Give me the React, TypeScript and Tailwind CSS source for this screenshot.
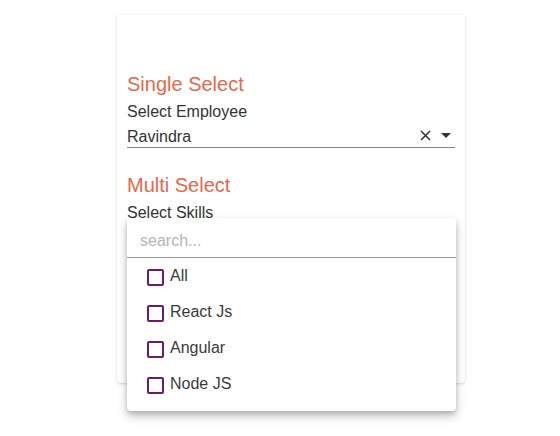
import { useState } from "react";

const skills = ["All", "React Js", "Angular", "Node JS"];

const App = () => {
	const [query, setQuery] = useState("");

	return (
		<div className="relative h-[436px] w-[560px] overflow-hidden bg-white font-['Liberation_Sans',Arial,sans-serif] text-[#333]">
			<div className="ml-[117px] mt-[15px] h-[368px] w-[348px] rounded-b bg-white px-[10px] pt-[57px] shadow-[0_1px_3px_rgba(0,0,0,0.16),0_0_1px_rgba(0,0,0,0.08)]">
				<h2 className="text-[20px] leading-[24px] text-[#e8674a]">Single Select</h2>
				<div className="mt-[6px] text-[16px] leading-[19px]">Select Employee</div>
				<div className="mt-[6px] flex h-[21px] items-start border-b border-[#888] pr-[4px]">
					<span className="flex-1 text-[16px] leading-[19px]">Ravindra</span>
					<span className="flex items-center gap-[10px] pt-[3px]">
						<svg width="11" height="11" viewBox="0 0 11 11">
							<path d="M1 1 L10 10 M10 1 L1 10" stroke="#333" strokeWidth="1.5" />
						</svg>
						<svg width="10" height="6" viewBox="0 0 10 6">
							<path d="M0 0 L10 0 L5 5 Z" fill="#333" />
						</svg>
					</span>
				</div>
				<h2 className="mt-[25px] text-[20px] leading-[24px] text-[#e8674a]">Multi Select</h2>
				<div className="mt-[6px] text-[16px] leading-[19px]">Select Skills</div>
			</div>

			<div className="absolute left-[127px] top-[218px] w-[329px] rounded bg-white pb-[9px] shadow-[0_5px_10px_rgba(0,0,0,0.25),0_2px_4px_rgba(0,0,0,0.12)]">
				<input
					value={query}
					onChange={(e) => setQuery(e.target.value)}
					placeholder="search..."
					className="block h-[40px] w-full border-b border-[#999] bg-transparent px-[13px] pt-[6px] text-[16px] outline-none placeholder:text-[#b5b5b5]"
				/>
				{skills.map((s) => (
					<label key={s} className="flex h-[36px] items-center gap-[6px] pb-[2px] pl-[20px]">
						<span className="mt-[4px] h-[17px] w-[17px] rounded-[2px] border-2 border-[#6b1c6e]" />
						<span className="text-[16px] leading-[19px] text-[#3a3a3a]">{s}</span>
					</label>
				))}
			</div>
		</div>
	);
};

export default App;
